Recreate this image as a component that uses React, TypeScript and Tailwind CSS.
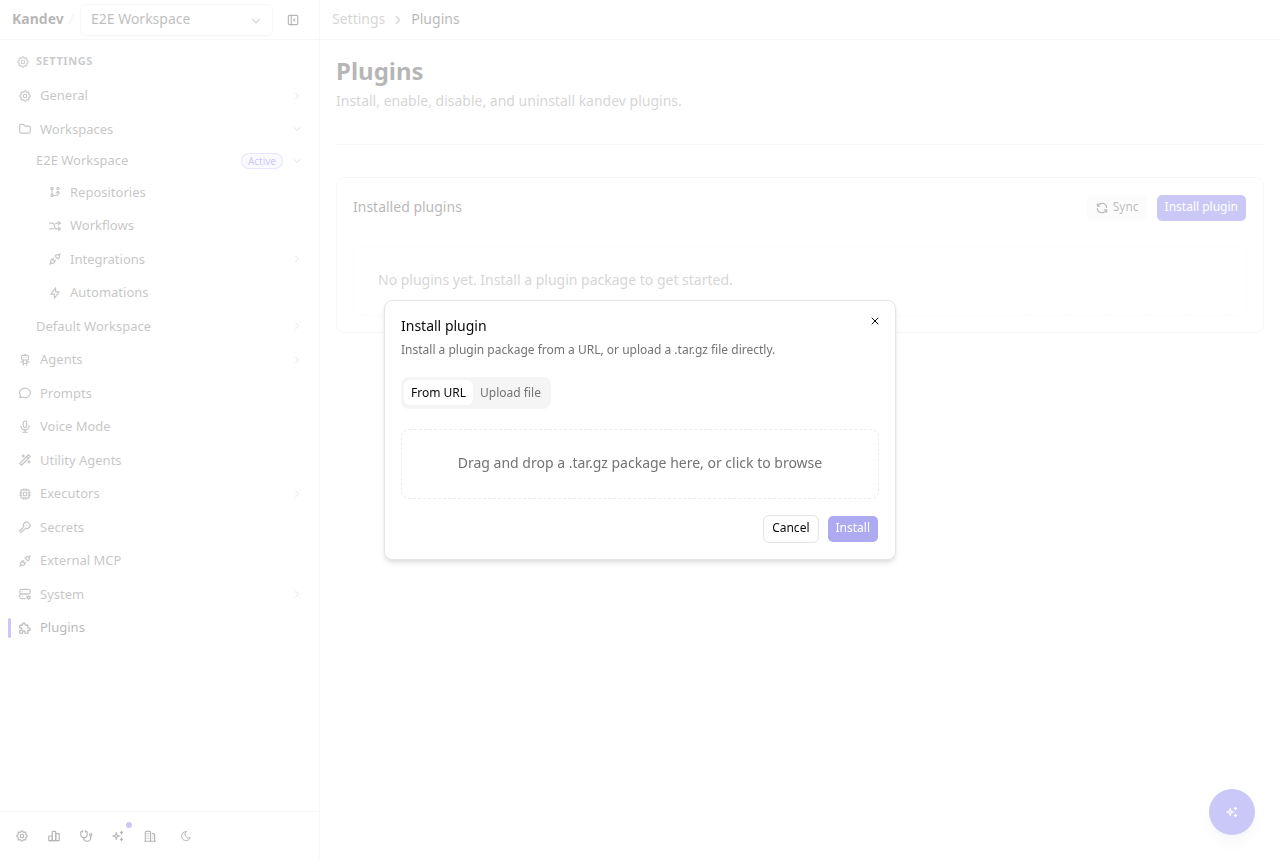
import React, { useState } from 'react';
import {
  TbArrowsShuffle,
  TbBolt,
  TbBuildings,
  TbChartBar,
  TbChevronDown,
  TbChevronRight,
  TbCpu,
  TbFolder,
  TbGitBranch,
  TbKey,
  TbLayoutSidebarLeftCollapse,
  TbMessageCircle,
  TbMicrophone,
  TbMoon,
  TbPlugConnected,
  TbPuzzle,
  TbRefresh,
  TbRobot,
  TbServerCog,
  TbSettings,
  TbSparkles,
  TbStethoscope,
  TbWand,
  TbX,
} from 'react-icons/tb';

type Icon = React.ComponentType<{ className?: string }>;

interface NavItem {
  label: string;
  icon?: Icon;
  expand?: 'right' | 'down';
  badge?: string;
  active?: boolean;
}

const workspacePages: NavItem[] = [
  { label: 'Repositories', icon: TbGitBranch },
  { label: 'Workflows', icon: TbArrowsShuffle },
  { label: 'Integrations', icon: TbPlugConnected, expand: 'right' },
  { label: 'Automations', icon: TbBolt },
];

const settingsPages: NavItem[] = [
  { label: 'Agents', icon: TbRobot, expand: 'right' },
  { label: 'Prompts', icon: TbMessageCircle },
  { label: 'Voice Mode', icon: TbMicrophone },
  { label: 'Utility Agents', icon: TbWand },
  { label: 'Executors', icon: TbCpu, expand: 'right' },
  { label: 'Secrets', icon: TbKey },
  { label: 'External MCP', icon: TbPlugConnected },
  { label: 'System', icon: TbServerCog, expand: 'right' },
  { label: 'Plugins', icon: TbPuzzle, active: true },
];

function NavRow({ item, indent = 'pl-2.5' }: { item: NavItem; indent?: string }) {
  const ItemIcon = item.icon;
  return (
    <a
      href="#"
      className={`relative flex items-center gap-2 py-1.5 pr-2 text-[13px] leading-normal ${indent} ${
        item.active ? 'text-neutral-950' : 'text-neutral-700'
      }`}
    >
      {item.active && <span className="absolute inset-y-1.5 left-0 w-[3px] rounded-full bg-[#4f46e5]" />}
      {ItemIcon && <ItemIcon className="size-3.5 shrink-0" />}
      <span className="flex-1 truncate">{item.label}</span>
      {item.badge && (
        <span className="rounded-full border border-[#4f46e5]/40 bg-[#4f46e5]/10 px-1.5 text-[10px] leading-[14px] text-[#4f46e5]">
          {item.badge}
        </span>
      )}
      {item.expand === 'right' && <TbChevronRight className="size-3 shrink-0 text-neutral-400" />}
      {item.expand === 'down' && <TbChevronDown className="size-3 shrink-0 text-neutral-400" />}
    </a>
  );
}

interface FooterButtonProps {
  label: string;
  icon: Icon;
  iconClass?: string;
  dot?: boolean;
}

function FooterButton({ label, icon: ButtonIcon, iconClass = 'size-3.5', dot }: FooterButtonProps) {
  return (
    <button aria-label={label} className="relative flex size-7 items-center justify-center rounded-md">
      <ButtonIcon className={iconClass} />
      {dot && <span className="absolute top-0 right-0 size-1.5 rounded-full bg-[#4f46e5]" />}
    </button>
  );
}

function Sidebar() {
  return (
    <aside className="flex w-80 shrink-0 flex-col border-r border-neutral-200">
      {/* Workspace switcher */}
      <div className="flex h-10 items-center gap-1.5 border-b border-neutral-200 px-3 text-sm">
        <div className="flex gap-[5px] pb-0.5">
          <span className="font-bold">Kandev</span>
          <span className="text-neutral-300">/</span>
        </div>
        <div className="relative flex-1">
          <select
            aria-label="Workspace"
            className="h-8 w-full appearance-none rounded-md border border-neutral-200 px-2.5 pb-0.5 text-sm text-neutral-800 shadow-xs"
          >
            <option>E2E Workspace</option>
            <option>Default Workspace</option>
          </select>
          <TbChevronDown className="pointer-events-none absolute top-2.5 right-2.5 size-3.5 text-neutral-500" />
        </div>
        <button aria-label="Collapse sidebar" className="flex size-7 items-center justify-center">
          <TbLayoutSidebarLeftCollapse className="size-3.5" />
        </button>
      </div>

      {/* Settings navigation */}
      <nav className="flex-1 px-2 pt-3">
        <div className="flex h-5 items-center gap-1.5 px-2 text-[11px] font-bold tracking-wider text-neutral-600 uppercase">
          <TbSettings className="size-3.5" />
          <span className="pb-0.5">Settings</span>
        </div>
        <div className="mt-2 flex flex-col gap-0.5">
          <NavRow item={{ label: 'General', icon: TbSettings, expand: 'right' }} />
          <div>
            <NavRow item={{ label: 'Workspaces', icon: TbFolder, expand: 'down' }} />
            <div className="flex flex-col gap-0.5">
              <div>
                <NavRow item={{ label: 'E2E Workspace', badge: 'Active', expand: 'down' }} indent="pl-7" />
                <div className="flex flex-col gap-0.5">
                  {workspacePages.map((item) => (
                    <NavRow key={item.label} item={item} indent="pl-10" />
                  ))}
                </div>
              </div>
              <NavRow item={{ label: 'Default Workspace', expand: 'right' }} indent="pl-7" />
            </div>
          </div>
          {settingsPages.map((item) => (
            <NavRow key={item.label} item={item} />
          ))}
        </div>
      </nav>

      <div className="flex h-[49px] items-center gap-1 border-t border-neutral-200 px-2">
        <FooterButton label="Settings" icon={TbSettings} />
        <FooterButton label="Stats" icon={TbChartBar} />
        <FooterButton label="Health" icon={TbStethoscope} />
        <FooterButton label="What's new" icon={TbSparkles} dot />
        <FooterButton label="Organization" icon={TbBuildings} />
        <div className="pl-1">
          <FooterButton label="Toggle theme" icon={TbMoon} iconClass="size-3" />
        </div>
      </div>
    </aside>
  );
}

function PluginsPage() {
  return (
    <main className="min-w-0 flex-1">
      <div className="flex h-10 items-center gap-1.5 border-b border-neutral-200 px-3 text-sm">
        <a href="#" className="pb-0.5 text-neutral-500">Settings</a>
        <TbChevronRight className="size-3.5 text-neutral-500" />
        <span className="pb-0.5">Plugins</span>
      </div>

      <div className="px-4 pt-[15px] pb-4">
        <div className="border-b border-neutral-200 pb-[33px]">
          <h1 className="text-2xl font-bold">Plugins</h1>
          <p className="mt-1 text-sm text-neutral-500">Install, enable, disable, and uninstall kandev plugins.</p>
        </div>

        <section className="mt-8 rounded-lg border border-neutral-200 p-4">
          <div className="flex items-center gap-2">
            <h2 className="flex-1 pb-0.5 text-sm">Installed plugins</h2>
            <button className="flex h-7 items-center gap-1 rounded-md border border-transparent bg-neutral-100 bg-clip-padding px-2 text-xs text-neutral-900">
              <TbRefresh className="size-3.5" />
              <span className="pb-0.5">Sync</span>
            </button>
            <button className="h-7 rounded-md border border-transparent bg-[#4f46e5] bg-clip-padding px-2 pb-0.5 text-xs text-white">
              Install plugin
            </button>
          </div>
          <div className="mt-6 rounded-lg border border-dashed border-neutral-200/70 px-6 pt-[23px] pb-[25px] text-sm text-neutral-500">
            No plugins yet. Install a plugin package to get started.
          </div>
        </section>
      </div>

      <button
        aria-label="Open assistant"
        className="fixed right-6 bottom-6 flex size-12 items-center justify-center rounded-full border border-transparent bg-[#4f46e5] bg-clip-padding text-white shadow-lg"
      >
        <TbSparkles className="size-3.5" />
      </button>
    </main>
  );
}

function InstallDialog() {
  const [tab, setTab] = useState('url');

  const tabClass = (name: string) =>
    `h-[25px] rounded-md border border-transparent px-1.5 text-xs ${
      tab === name ? 'bg-white text-neutral-950' : 'text-neutral-500'
    }`;

  return (
    <div className="fixed inset-0 flex items-center justify-center bg-white/70">
      <div
        role="dialog"
        aria-labelledby="install-title"
        className="relative w-full max-w-lg rounded-lg border border-neutral-200 bg-white px-4 pt-[15px] pb-4 shadow-md"
      >
        <h2 id="install-title" className="text-sm">Install plugin</h2>
        <p className="mt-1 text-xs leading-5 text-neutral-500">
          Install a plugin package from a URL, or upload a .tar.gz file directly.
        </p>
        <button aria-label="Close" className="absolute top-2 right-2 flex size-6 items-center justify-center">
          <TbX className="size-3" />
        </button>

        <div role="tablist" className="mt-[17px] inline-flex h-8 rounded-lg bg-neutral-100 p-[3px]">
          <button role="tab" aria-selected={tab === 'url'} className={tabClass('url')} onClick={() => setTab('url')}>
            From URL
          </button>
          <button role="tab" aria-selected={tab === 'file'} className={tabClass('file')} onClick={() => setTab('file')}>
            Upload file
          </button>
        </div>

        <button className="mt-5 block w-full rounded-lg border border-dashed border-neutral-200/70 px-6 pt-[23px] pb-[25px] text-center text-sm text-neutral-500">
          Drag and drop a .tar.gz package here, or click to browse
        </button>

        <div className="mt-4 flex justify-end gap-2">
          <button className="h-7 rounded-md border border-neutral-200 px-2 pb-0.5 text-xs">Cancel</button>
          <button
            disabled
            className="h-7 rounded-md border border-transparent bg-[#5f57e7] bg-clip-padding px-2 pb-0.5 text-xs text-white opacity-50"
          >
            Install
          </button>
        </div>
      </div>
    </div>
  );
}

export default function App() {
  return (
    <div className="flex min-h-screen bg-white font-['Noto_Sans',sans-serif] text-neutral-950">
      <Sidebar />
      <PluginsPage />
      <InstallDialog />
    </div>
  );
}
